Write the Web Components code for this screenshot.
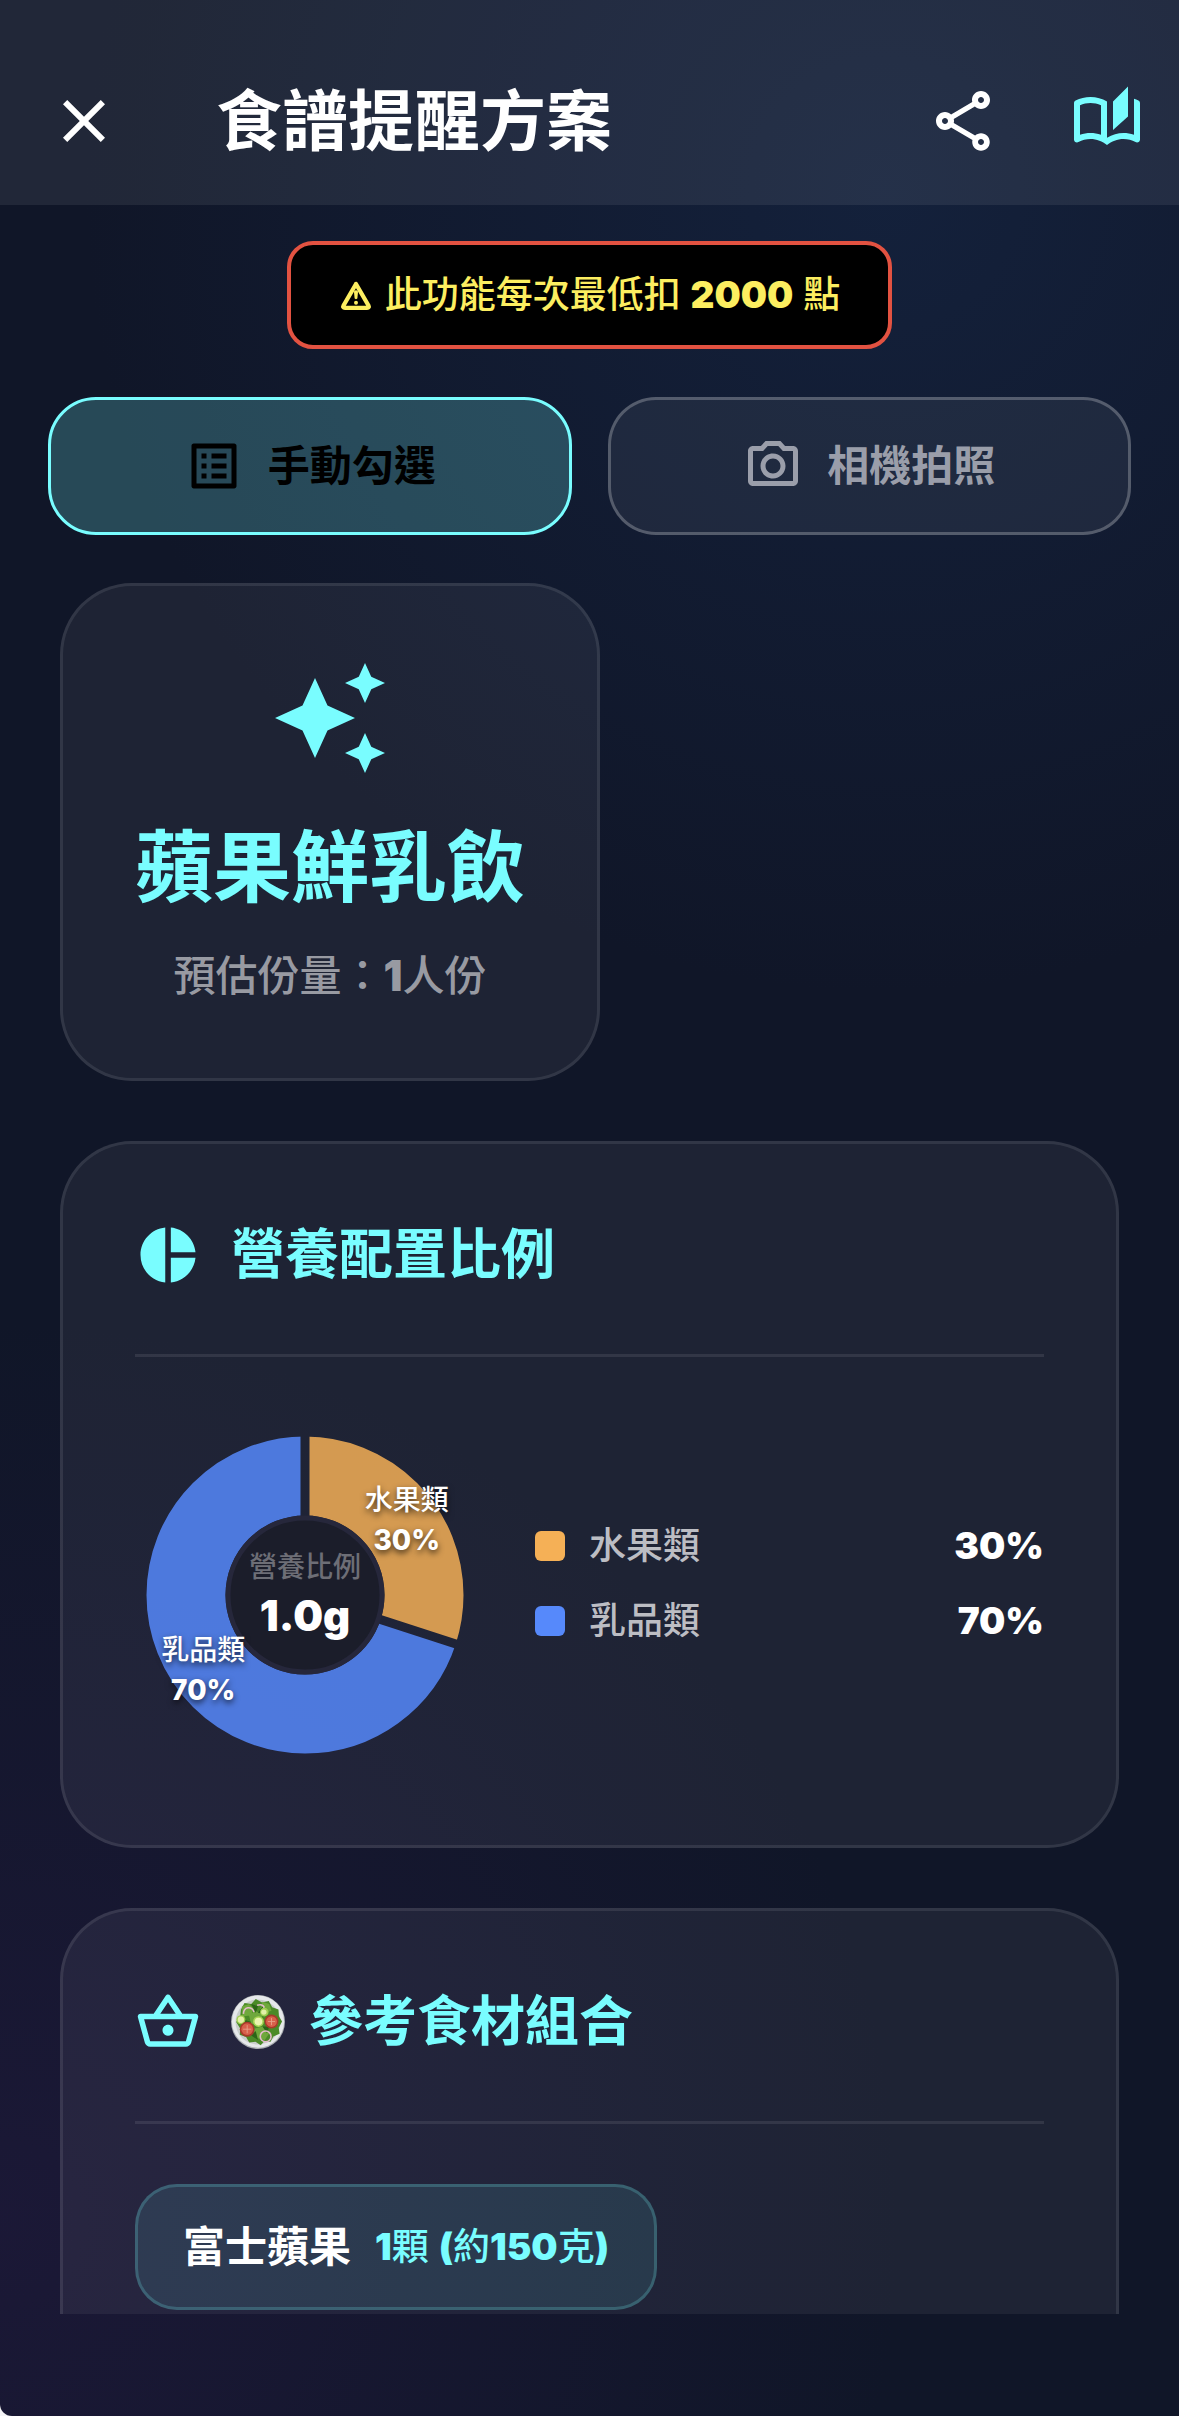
<!DOCTYPE html>
<html lang="zh-Hant">
<head>
<meta charset="utf-8">
<meta name="viewport" content="width=device-width, initial-scale=1">
<title>食譜提醒方案</title>
<style>
    :root {
        --accent: #79fdff;
        --muted: #989aa2;
        --line: rgba(255, 255, 255, 0.09);
        --glass: rgba(255, 255, 255, 0.06);
        --text-sm: 28px;
        --text-md: 37px;
        --text-lg: 42px;
        --text-xl: 54px;
    }
    body {
        margin: 0;
        background: #f4f4f6;
        color: #fff;
        font-family: Inter, "Noto Sans CJK TC", sans-serif;
        font-weight: 700;
    }
    b {
        font-weight: 900;
    }
</style>
</head>
<body>

<recipe-app>
    <app-bar slot="bar">
        <icon-button slot="leading" icon="close" label="關閉"></icon-button>
        食譜提醒方案
        <icon-button slot="actions" icon="share" label="分享"></icon-button>
        <icon-button slot="actions" icon="stories" label="食譜" accent></icon-button>
    </app-bar>

    <cost-notice slot="top">此功能每次最低扣 <b>2000</b> 點</cost-notice>
    <mode-tabs slot="top">
        <mode-tab icon="list" selected>手動勾選</mode-tab>
        <mode-tab icon="camera">相機拍照</mode-tab>
    </mode-tabs>

    <glass-card fit>
        <recipe-summary>
            蘋果鮮乳飲
            <span slot="servings">預估份量：<b>1</b>人份</span>
        </recipe-summary>
    </glass-card>

    <glass-card>
        <section-heading icon="pie">營養配置比例</section-heading>
        <nutrition-ratio total="1.0g" caption="營養比例">
            <legend-row name="水果類" percent="30" color="#f5b056"></legend-row>
            <legend-row name="乳品類" percent="70" color="#5689fb"></legend-row>
        </nutrition-ratio>
    </glass-card>

    <glass-card>
        <section-heading icon="basket"><md-icon name="salad" slot="emoji"></md-icon>參考食材組合</section-heading>
        <ingredient-chip>富士蘋果<span slot="amount"><b>1</b>顆 <b>(</b>約<b>150</b>克<b>)</b></span></ingredient-chip>
    </glass-card>
</recipe-app>

<script>
/* ---------- Icons, all on a 24 unit grid ---------- */
const ICONS = {
    close: '<path d="M19 6.41 17.59 5 12 10.59 6.41 5 5 6.41 10.59 12 5 17.59 6.41 19 12 13.41 17.59 19 19 17.59 13.41 12z"/>',
    share: '<path d="M18 16.08c-.76 0-1.44.3-1.96.77L8.91 12.7c.05-.23.09-.46.09-.7s-.04-.47-.09-.7l7.05-4.11c.54.5 1.25.81 2.04.81 1.66 0 3-1.34 3-3s-1.34-3-3-3-3 1.34-3 3c0 .24.04.47.09.7L8.04 9.81C7.5 9.31 6.79 9 6 9c-1.66 0-3 1.34-3 3s1.34 3 3 3c.79 0 1.5-.31 2.04-.81l7.12 4.16c-.05.21-.08.43-.08.65 0 1.61 1.31 2.92 2.92 2.92s2.92-1.31 2.92-2.92-1.31-2.92-2.92-2.92zM18 4c.55 0 1 .45 1 1s-.45 1-1 1-1-.45-1-1 .45-1 1-1zM6 13c-.55 0-1-.45-1-1s.45-1 1-1 1 .45 1 1-.45 1-1 1zm12 7.02c-.55 0-1-.45-1-1s.45-1 1-1 1 .45 1 1-.45 1-1 1z"/>',
    stories: '<path d="M22.47 5.2c-.47-.24-.96-.44-1.47-.61v12.03c-1.14-.41-2.31-.62-3.5-.62-1.9 0-3.78.54-5.5 1.58V5.48C10.38 4.55 8.51 4 6.5 4c-1.79 0-3.48.44-4.97 1.2C1.2 5.36 1 5.71 1 6.08v12.08c0 .58.47.99 1 .99.16 0 .32-.04.48-.12C3.69 18.4 5.05 18 6.5 18c2.07 0 3.98.82 5.5 2 1.52-1.18 3.43-2 5.5-2 1.45 0 2.81.4 4.02 1.04.16.08.32.12.48.12.52 0 1-.41 1-.99V6.08c0-.37-.2-.72-.53-.88zM10 16.62C8.86 16.21 7.69 16 6.5 16s-2.36.21-3.5.62V6.71C4.11 6.24 5.28 6 6.5 6c1.2 0 2.39.25 3.5.72v9.9zM19 .5l-5 5V15l5-4.5V.5z"/>',
    warning: '<path d="M12 4.2 3.2 19.4q-.8 1.6 1 1.6h15.6q1.8 0 1-1.6z" fill="none" stroke="currentColor" stroke-width="3" stroke-linejoin="round"/><path d="M12 8.6c1 0 1.5.6 1.4 1.5l-.4 4.1c-.1 1-1.9 1-2 0l-.4-4.1c-.1-.9.4-1.5 1.4-1.5z"/><circle cx="12" cy="17.4" r="1.4"/>',
    list: '<path d="M11 7h6v2h-6zm0 4h6v2h-6zm0 4h6v2h-6zM7 7h2v2H7zm0 4h2v2H7zm0 4h2v2H7zM20.1 3H3.9c-.5 0-.9.4-.9.9v16.2c0 .4.4.9.9.9h16.2c.4 0 .9-.5.9-.9V3.9c0-.5-.5-.9-.9-.9zM19 19H5V5h14v14z"/>',
    camera: '<path d="M20 4h-3.17L15 2H9L7.17 4H4c-1.1 0-2 .9-2 2v12c0 1.1.9 2 2 2h16c1.1 0 2-.9 2-2V6c0-1.1-.9-2-2-2zm0 14H4V6h4.05l1.83-2h4.24l1.83 2H20v12zM12 7c-2.76 0-5 2.24-5 5s2.24 5 5 5 5-2.24 5-5-2.24-5-5-5zm0 8c-1.65 0-3-1.35-3-3s1.35-3 3-3 3 1.35 3 3-1.35 3-3 3z"/>',
    sparkle: '<path d="m19 9 1.25-2.75L23 5l-2.75-1.25L19 1l-1.25 2.75L15 5l2.75 1.25L19 9zm-7.5.5L9 4 6.5 9.5 1 12l5.5 2.5L9 20l2.5-5.5L17 12l-5.5-2.5zM19 15l-1.25 2.75L15 19l2.75 1.25L19 23l1.25-2.75L23 19l-2.75-1.25L19 15z"/>',
    pie: '<path d="M11 2v20c-5.07-.5-9-4.79-9-10s3.93-9.5 9-10zm2.03 0v8.99H22c-.47-4.74-4.24-8.52-8.97-8.99zm0 11.01V22c4.74-.47 8.5-4.25 8.97-8.99h-8.97z"/>',
    basket: '<path d="M22 9h-4.79l-4.38-6.56c-.19-.28-.51-.42-.83-.42s-.64.14-.83.43L6.79 9H2c-.55 0-1 .45-1 1 0 .09.01.18.04.27l2.54 9.27c.23.84 1 1.46 1.92 1.46h13c.92 0 1.69-.62 1.93-1.46l2.54-9.27L23 10c0-.55-.45-1-1-1zM12 4.8 14.8 9H9.2L12 4.8zM18.5 19l-12.99.01L3.31 11H20.7l-2.2 8zM12 13c-1.1 0-2 .9-2 2s.9 2 2 2 2-.9 2-2-.9-2-2-2z"/>',
    salad: `
        <circle cx="12" cy="12" r="12" fill="#a9adb1"/>
        <circle cx="12" cy="11.8" r="11.6" fill="#e6e8ea"/>
        <circle cx="12" cy="12" r="10" fill="#c9cecb"/>
        <path d="M4.4 6.5 6 3.6l3 .4 2-2.2 2.8 1.5 3-.6 1.5 2.7 2.8 1 .2 3 1.4 2.4-1.5 2.8.4 2.6-2.8 1.2-1.2 2.4-2.8-.2-1.6 1.7-2.3-1.5-2.8.3-1.4-2.4-2.8-1 .2-2.8L2.3 12l1.8-2.4z" fill="#4a8a27"/>
        <path d="m5 5 3-1 2 2-1 3-4 .5zM14 3l3 1 1 3-3 1-2-2zM8 9l3-2 3 2-1 3-4 1zM17 10l3 0 1 3-3 2zM10 15l4-1 3 3-2 3-4-1z" fill="#6fa83c"/>
        <path d="m9 4 3 1-1 3zM12 8l2-3 1 3zM6 11l3 1-2 2zM14 14l3 0-1 3zM9 18l2-2 1 4z" fill="#2c6418"/>
        <circle cx="4.4" cy="11" r="2" fill="#9fce50"/><circle cx="4.4" cy="11" r="1.4" fill="#e3f0a8"/>
        <circle cx="14.8" cy="7.6" r="1.9" fill="#9fce50"/><circle cx="14.6" cy="7.6" r="1.2" fill="#e3f0a8"/>
        <circle cx="12.2" cy="11.8" r="2.4" fill="#a9d657"/><circle cx="12.2" cy="11.8" r="1.7" fill="#eaf5b0"/>
        <circle cx="7.2" cy="15.2" r="3.3" fill="#a83a2a"/><circle cx="7.2" cy="15.2" r="2.6" fill="#d8604a"/>
        <path d="M7.2 13.4v3.6M5.4 15.2h3.6" stroke="#e8a088" stroke-width=".4"/>
        <circle cx="18" cy="11.8" r="3.1" fill="#a83a2a"/><circle cx="18" cy="11.8" r="2.4" fill="#d8604a"/>
        <path d="M18 10.2v3.2M16.4 11.8h3.2" stroke="#e8a088" stroke-width=".4"/>
        <g fill="none" stroke="#e3bccb" stroke-width=".7"><circle cx="15.4" cy="18.4" r="2.4"/><path d="M5.6 8.4a2.3 2.3 0 0 1 4.6-.8M11.6 4.6q2.4-.8 3.2 1"/></g>`
};

/** Clones the markup into an open shadow root */
function render(host, html) {
    const template = document.createElement('template');
    template.innerHTML = html;
    host.attachShadow({ mode: 'open' }).appendChild(template.content.cloneNode(true));
}

class MdIcon extends HTMLElement {
    connectedCallback() {
        if (this.shadowRoot) return;
        render(this, `
            <style>
                :host { display: block; flex: none; width: var(--icon-size, 72px); height: var(--icon-size, 72px); }
                svg { display: block; width: 100%; height: 100%; }
            </style>
            <svg viewBox="0 0 24 24" fill="currentColor" aria-hidden="true">${ICONS[this.getAttribute('name')]}</svg>
        `);
    }
}

/* Page frame: fixed bar on top, scrolling cards, safe area at the bottom */
class RecipeApp extends HTMLElement {
    constructor() {
        super();
        render(this, `
            <style>
                :host {
                    display: flex;
                    flex-direction: column;
                    box-sizing: border-box;
                    height: 100vh;
                    padding-bottom: 102px;
                    overflow: hidden;
                    border-radius: 0 0 0 12px;
                    background:
                        radial-gradient(circle at 75% 8%, rgba(22, 40, 72, 0.6), rgba(22, 40, 72, 0) 800px),
                        radial-gradient(circle at 0% 92%, rgba(36, 26, 66, 0.55), rgba(36, 26, 66, 0) 900px),
                        #101628;
                }
                .top { display: flex; flex-direction: column; gap: 48px; padding: 36px 48px 48px; }
                main {
                    display: flex;
                    flex-direction: column;
                    flex: 1;
                    gap: 60px;
                    min-height: 0;
                    padding: 0 60px;
                    overflow-y: auto;
                    scrollbar-width: none;
                }
            </style>
            <slot name="bar"></slot>
            <div class="top"><slot name="top"></slot></div>
            <main><slot></slot></main>
        `);
    }
}

class AppBar extends HTMLElement {
    constructor() {
        super();
        render(this, `
            <style>
                :host { display: block; padding-top: 37px; background: rgba(255, 255, 255, 0.075); }
                header { display: flex; align-items: center; height: 168px; }
                h1 { flex: 1; margin: 0; padding-left: 48px; font-size: 66px; line-height: 90px; font-weight: 700; }
                .leading { width: 168px; display: flex; justify-content: center; }
            </style>
            <header>
                <div class="leading"><slot name="leading"></slot></div>
                <h1><slot></slot></h1>
                <slot name="actions"></slot>
            </header>
        `);
    }
}

class IconButton extends HTMLElement {
    connectedCallback() {
        if (this.shadowRoot) return;
        render(this, `
            <style>
                :host { display: block; }
                :host([accent]) { color: var(--accent); }
                button {
                    display: flex;
                    align-items: center;
                    justify-content: center;
                    width: 144px;
                    height: 144px;
                    padding: 0;
                    border: 0;
                    background: none;
                    color: inherit;
                }
            </style>
            <button type="button" aria-label="${this.getAttribute('label')}"><md-icon name="${this.getAttribute('icon')}"></md-icon></button>
        `);
    }
}

class CostNotice extends HTMLElement {
    constructor() {
        super();
        render(this, `
            <style>
                :host {
                    display: flex;
                    align-items: center;
                    align-self: center;
                    gap: 12px;
                    padding: 26px 48px;
                    border: 4px solid #e25241;
                    border-radius: 26px;
                    background: #000;
                    color: #fcee60;
                    font-size: var(--text-md);
                    font-weight: 500;
                    line-height: 48px;
                }
                md-icon { --icon-size: 34px; }
            </style>
            <md-icon name="warning"></md-icon>
            <span><slot></slot></span>
        `);
    }
}

class ModeTabs extends HTMLElement {
    constructor() {
        super();
        render(this, `
            <style>
                :host { display: grid; grid-template-columns: 1fr 1fr; gap: 36px; }
            </style>
            <slot></slot>
        `);
    }
}

class ModeTab extends HTMLElement {
    connectedCallback() {
        if (this.shadowRoot) return;
        render(this, `
            <style>
                :host { display: block; --icon-size: 60px; }
                button {
                    display: flex;
                    align-items: center;
                    justify-content: center;
                    gap: 24px;
                    box-sizing: border-box;
                    width: 100%;
                    padding: 36px 24px;
                    border: 3px solid rgba(255, 255, 255, 0.24);
                    border-radius: 48px;
                    background: var(--glass);
                    color: #9a9eaa;
                    font: inherit;
                    font-size: var(--text-lg);
                    line-height: 60px;
                }
                :host([selected]) button {
                    border-color: var(--accent);
                    background: rgba(121, 253, 255, 0.22);
                    color: #000;
                }
            </style>
            <button type="button" aria-pressed="${this.hasAttribute('selected')}">
                <md-icon name="${this.getAttribute('icon')}"></md-icon>
                <span><slot></slot></span>
            </button>
        `);
    }
}

class GlassCard extends HTMLElement {
    constructor() {
        super();
        render(this, `
            <style>
                :host {
                    display: block;
                    flex: none;
                    box-sizing: border-box;
                    padding: 72px;
                    border: 3px solid var(--line);
                    border-radius: 72px;
                    background: var(--glass);
                }
                :host([fit]) { align-self: flex-start; }
            </style>
            <slot></slot>
        `);
    }
}

class RecipeSummary extends HTMLElement {
    constructor() {
        super();
        render(this, `
            <style>
                :host { display: flex; flex-direction: column; align-items: center; color: var(--accent); }
                md-icon { --icon-size: 120px; }
                h2 { margin: 36px 0 24px; font-size: 78px; line-height: 108px; font-weight: 700; }
                p { margin: 0; color: var(--muted); font-size: var(--text-lg); font-weight: 500; line-height: 60px; }
            </style>
            <md-icon name="sparkle"></md-icon>
            <h2><slot></slot></h2>
            <p><slot name="servings"></slot></p>
        `);
    }
}

class SectionHeading extends HTMLElement {
    connectedCallback() {
        if (this.shadowRoot) return;
        render(this, `
            <style>
                :host {
                    display: flex;
                    align-items: center;
                    gap: 30px;
                    margin-bottom: 60px;
                    padding-bottom: 60px;
                    border-bottom: 3px solid var(--line);
                    color: var(--accent);
                }
                md-icon { --icon-size: 66px; }
                h2 { display: flex; align-items: center; gap: 24px; margin: 0; font-size: var(--text-xl); line-height: 78px; font-weight: 700; }
                ::slotted(md-icon) { --icon-size: 54px; }
            </style>
            <md-icon name="${this.getAttribute('icon')}"></md-icon>
            <h2><slot name="emoji"></slot><span><slot></slot></span></h2>
        `);
    }
}

/* Donut built from its legend rows, first share starts at 12 o'clock */
class NutritionRatio extends HTMLElement {
    connectedCallback() {
        if (this.shadowRoot) return;
        const rows = [...this.querySelectorAll('legend-row')];
        let start = 0;
        let arcs = '';
        let cuts = '';
        let labels = '';
        rows.forEach((row) => {
            const share = Number(row.getAttribute('percent'));
            const middle = (start + share / 2) / 100 * 2 * Math.PI;
            const left = 50 + 37 * Math.sin(middle);
            const top = 50 - 36 * Math.cos(middle);
            arcs += `<circle cx="170" cy="170" r="119" pathLength="100" stroke="${row.getAttribute('color')}" stroke-dasharray="${share} ${100 - share}" stroke-dashoffset="${-start}"/>`;
            cuts += `<path d="M0 0V-170" transform="translate(170 170) rotate(${start * 3.6})"/>`;
            labels += `<div class="label" style="left:${left}%;top:${top}%">${row.getAttribute('name')}<br><b>${share}%</b></div>`;
            start += share;
        });
        render(this, `
            <style>
                :host { display: flex; align-items: center; gap: 60px; }
                .chart { position: relative; flex: none; width: 340px; padding: 8px 0; }
                svg { display: block; width: 340px; height: 340px; }
                .center, .label { position: absolute; text-align: center; white-space: nowrap; transform: translate(-50%, -50%); }
                .center { left: 50%; top: 50%; font-size: var(--text-lg); line-height: 56px; font-weight: 900; }
                .caption { color: #6d6e76; font-size: var(--text-sm); line-height: 42px; font-weight: 500; }
                .label { font-size: var(--text-sm); line-height: 40px; font-weight: 500; text-shadow: 0 3px 6px rgba(0, 0, 0, 0.7); }
                .label b { font-weight: 800; }
                .legend { flex: 1; }
            </style>
            <div class="chart">
                <svg viewBox="0 0 340 340" aria-hidden="true">
                    <mask id="cuts" maskUnits="userSpaceOnUse" x="0" y="0" width="340" height="340">
                        <rect width="340" height="340" fill="#fff"/>
                        <g stroke="#000" stroke-width="9">${cuts}</g>
                    </mask>
                    <g mask="url(#cuts)">
                        <g fill="none" stroke-width="79" opacity="0.85" transform="rotate(-90 170 170)">${arcs}</g>
                    </g>
                    <circle cx="170" cy="170" r="77" fill="#1b1d2a" stroke="#26273b" stroke-width="5"/>
                </svg>
                <div class="center"><div class="caption">${this.getAttribute('caption')}</div>${this.getAttribute('total')}</div>
                ${labels}
            </div>
            <div class="legend"><slot></slot></div>
        `);
    }
}

class LegendRow extends HTMLElement {
    connectedCallback() {
        if (this.shadowRoot) return;
        render(this, `
            <style>
                :host { display: flex; align-items: center; gap: 24px; padding-bottom: 24px; font-size: var(--text-md); line-height: 51px; }
                i { width: 30px; height: 30px; border-radius: 6px; background: ${this.getAttribute('color')}; }
                .name { flex: 1; color: #bcbdc3; font-weight: 500; }
                .value { font-weight: 900; }
            </style>
            <i></i>
            <span class="name">${this.getAttribute('name')}</span>
            <span class="value">${this.getAttribute('percent')}%</span>
        `);
    }
}

class IngredientChip extends HTMLElement {
    constructor() {
        super();
        render(this, `
            <style>
                :host {
                    display: inline-flex;
                    align-items: center;
                    gap: 24px;
                    padding: 30px 45px;
                    border: 3px solid rgba(121, 253, 255, 0.2);
                    border-radius: 42px;
                    background: rgba(121, 253, 255, 0.1);
                    font-size: var(--text-lg);
                    line-height: 60px;
                }
                .amount { color: var(--accent); font-size: var(--text-md); font-weight: 500; }
            </style>
            <span><slot></slot></span>
            <span class="amount"><slot name="amount"></slot></span>
        `);
    }
}

customElements.define('md-icon', MdIcon);
customElements.define('recipe-app', RecipeApp);
customElements.define('app-bar', AppBar);
customElements.define('icon-button', IconButton);
customElements.define('cost-notice', CostNotice);
customElements.define('mode-tabs', ModeTabs);
customElements.define('mode-tab', ModeTab);
customElements.define('glass-card', GlassCard);
customElements.define('recipe-summary', RecipeSummary);
customElements.define('section-heading', SectionHeading);
customElements.define('nutrition-ratio', NutritionRatio);
customElements.define('legend-row', LegendRow);
customElements.define('ingredient-chip', IngredientChip);
</script>
</body>
</html>
